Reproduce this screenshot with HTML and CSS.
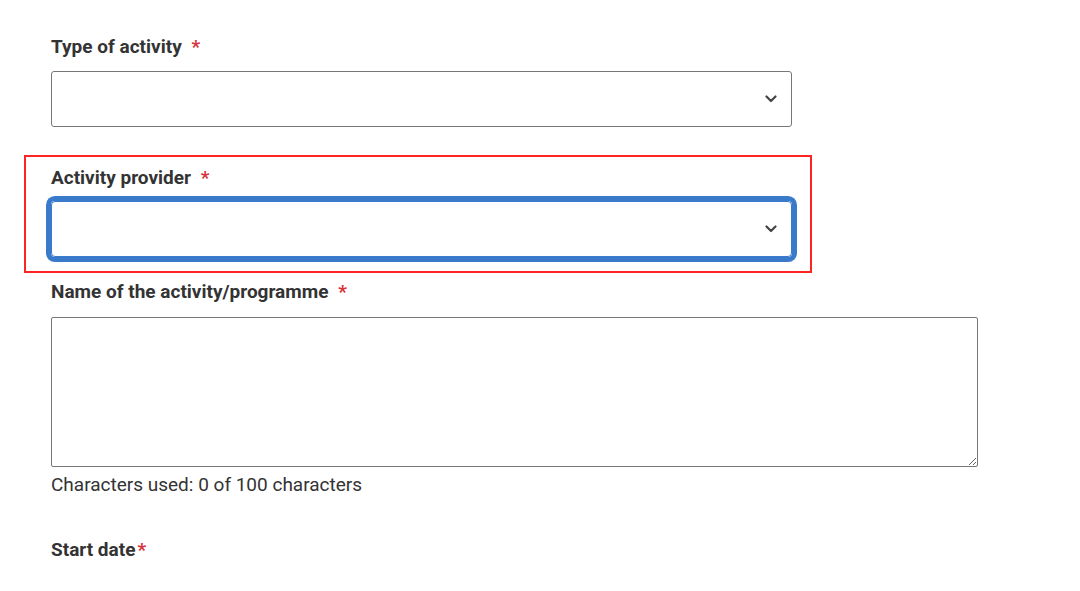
FILE: index.html
```html
<!DOCTYPE html>
<html lang="en">

<head>
    <meta charset="UTF-8">
    <meta name="viewport" content="width=device-width, initial-scale=1.0">
    <title>Activity form</title>
    <link rel="stylesheet" href="styles.css">
</head>

<body>
    <form class="activity-form">
        <!-- Type of activity -->
        <div class="field field-type">
            <label class="field-label">Type of activity <span class="required">*</span></label>
            <div class="select-box">
                <svg class="chevron" width="12" height="8" viewBox="0 0 12 8">
                    <path d="M1.5 1.5 L6 6 L10.5 1.5" fill="none" stroke="#444" stroke-width="2.2" stroke-linecap="round" stroke-linejoin="round" />
                </svg>
            </div>
        </div>

        <!-- Activity provider (highlighted) -->
        <div class="highlight">
            <div class="field">
                <label class="field-label">Activity provider <span class="required">*</span></label>
                <div class="select-box focused">
                    <svg class="chevron" width="12" height="8" viewBox="0 0 12 8">
                        <path d="M1.5 1.5 L6 6 L10.5 1.5" fill="none" stroke="#444" stroke-width="2.2" stroke-linecap="round" stroke-linejoin="round" />
                    </svg>
                </div>
            </div>
        </div>

        <!-- Name of the activity -->
        <div class="field field-name">
            <label class="field-label">Name of the activity/programme <span class="required">*</span></label>
            <textarea class="text-area"></textarea>
            <p class="char-count">Characters used: 0 of 100 characters</p>
        </div>

        <!-- Start date -->
        <div class="field field-date">
            <label class="field-label">Start date<span class="required tight">*</span></label>
        </div>
    </form>
</body>

</html>
```

FILE: styles.css
```css
body {
    margin: 0;
    padding: 0;
    background-color: #fff;
    font-family: Roboto, 'Liberation Sans', sans-serif;
    color: #333;
}

.activity-form {
    padding: 33px 0 0 51px;
}

.field-label {
    display: block;
    font-size: 19px;
    line-height: 27px;
    font-weight: 700;
    color: #333;
}

.required {
    color: #d8333b;
    margin-left: 5px;
}

.required.tight {
    margin-left: 2px;
}

.select-box {
    box-sizing: border-box;
    width: 741px;
    height: 56px;
    margin-top: 11px;
    border: 1px solid #777;
    border-radius: 3px;
    display: flex;
    align-items: center;
    justify-content: flex-end;
    padding-right: 14px;
}

.select-box.focused {
    margin-top: 10px;
    border-color: #3a7acb;
    border-radius: 4px;
    box-shadow: 0 0 0 5px #3a7acb;
}

/* Red annotation box around the provider field */
.highlight {
    box-sizing: border-box;
    width: 788px;
    margin: 28px 0 0 -27px;
    padding: 7px 18px 14px 25px;
    border: 2px solid #ff2424;
}

.field-name {
    margin-top: 5px;
}

.text-area {
    display: block;
    box-sizing: border-box;
    width: 927px;
    height: 150px;
    margin-top: 12px;
    border: 1px solid #777;
    border-radius: 2px;
    font-family: inherit;
    resize: vertical;
}

.char-count {
    margin: 4px 0 0;
    font-size: 19px;
    line-height: 27px;
    color: #333;
}

.field-date {
    margin-top: 38px;
}
```
